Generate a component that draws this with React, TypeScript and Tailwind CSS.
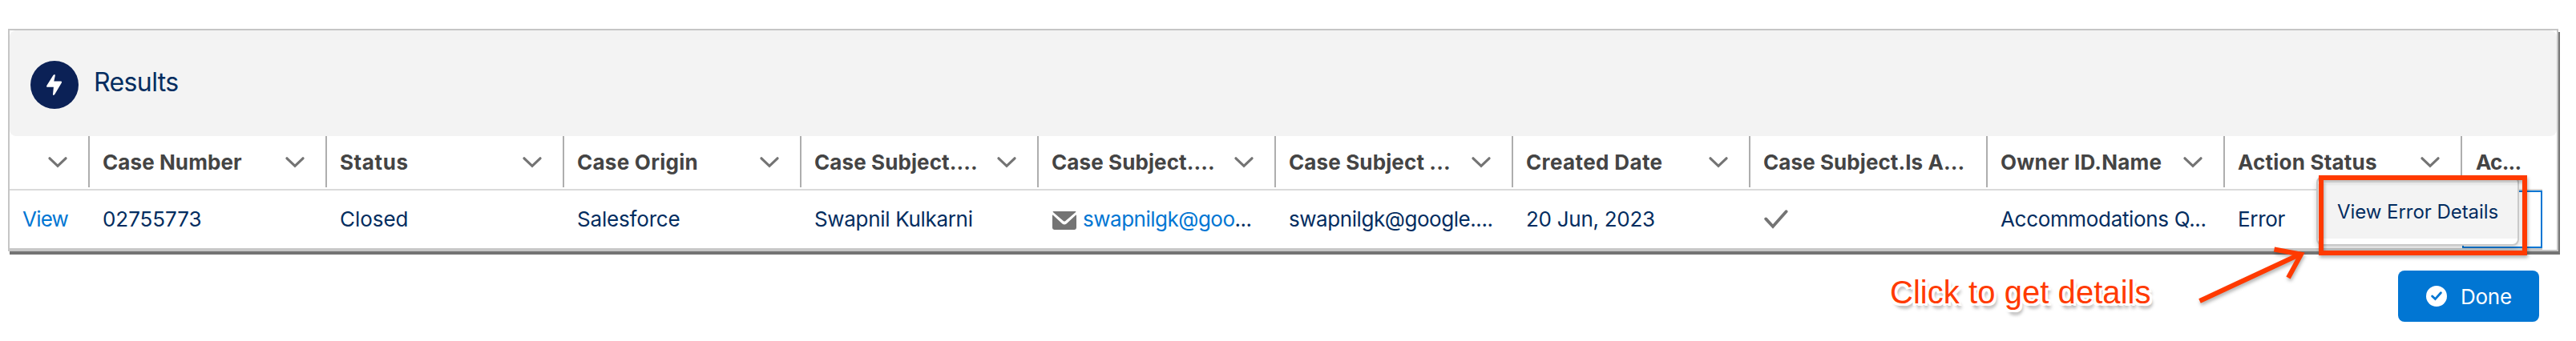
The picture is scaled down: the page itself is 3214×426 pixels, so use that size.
import React from 'react';

type Column = { title: string; tracking: string; menu?: boolean };

const columns: Column[] = [
  { title: 'Case Number', tracking: 'tracking-[0.086px]', menu: true },
  { title: 'Status', tracking: 'tracking-[0.6px]', menu: true },
  { title: 'Case Origin', tracking: 'tracking-[0.26px]', menu: true },
  { title: 'Case Subject....', tracking: 'tracking-[0.1px]', menu: true },
  { title: 'Case Subject....', tracking: 'tracking-[0.1px]', menu: true },
  { title: 'Case Subject ...', tracking: 'tracking-[0.13px]', menu: true },
  { title: 'Created Date', tracking: 'tracking-[0.37px]', menu: true },
  { title: 'Case Subject.Is A...', tracking: 'tracking-[0.08px]' },
  { title: 'Owner ID.Name', tracking: 'tracking-[0.22px]', menu: true },
  { title: 'Action Status', tracking: 'tracking-[0.21px]', menu: true },
];

function Chevron() {
  return (
    <svg className="h-[14px] w-6 shrink-0" viewBox="0 0 24 14" fill="none" stroke="#747474" strokeWidth="3.2" strokeLinecap="round" strokeLinejoin="miter">
      <path d="M2 1.8 12 11.4 22 1.8" />
    </svg>
  );
}

function HeaderCell({ title, tracking, menu }: Column) {
  return (
    <div className="flex h-16 w-[296px] items-center justify-between border-r-2 border-[#aeaeae] pt-0.5 pr-[26px] pl-4">
      <span className={`whitespace-nowrap text-[26px] leading-8 font-bold text-[#444444] ${tracking}`}>{title}</span>
      {menu && <Chevron />}
    </div>
  );
}

function Cell({ className = '', children }: { className?: string; children: React.ReactNode }) {
  return <div className={`flex w-[296px] items-center whitespace-nowrap pl-4 ${className}`}>{children}</div>;
}

function ActionMenu() {
  return (
    <div className="absolute top-[220px] left-[2890px] h-[87px] w-[253px] rounded-lg border-2 border-[#c9c9c9] bg-white pt-2 shadow-[0_4px_6px_rgba(0,0,0,0.16)]">
      <div className="flex h-[68px] items-center bg-[#f3f3f3] pt-0.5 pl-6 text-2xl leading-9 tracking-[-0.05px] whitespace-nowrap text-[#032d60]">
        View Error Details
      </div>
    </div>
  );
}

function Annotations() {
  return (
    <>
      <div className="absolute top-[219px] left-[2893px] h-[100px] w-[260px] border-[6px] border-[#ff3a00] drop-shadow-[1px_3px_2px_rgba(0,0,0,0.3)]" />
      <svg
        className="absolute top-[300px] left-[2730px] h-[90px] w-[160px] drop-shadow-[1px_3px_2px_rgba(0,0,0,0.3)]"
        viewBox="0 0 160 90"
        fill="none"
        stroke="#ff3a00"
        strokeWidth="6"
      >
        <path d="M14.5 76 141 17" />
        <path d="M107.5 11.5 141 17.8 125 47" strokeMiterlimit="10" />
      </svg>
      <div className="absolute top-[341px] left-[2358px] font-['Liberation_Sans',sans-serif] text-[40px] leading-[48px] tracking-[0.05px] whitespace-nowrap text-[#ff3a00] [text-shadow:0_0_2px_#fff,2px_0_0_#fff,-2px_0_0_#fff,0_2px_0_#fff,0_-2px_0_#fff,3px_3px_0_#fff,3px_-2px_0_#fff,-3px_3px_0_#fff,-2px_-2px_0_#fff,3px_6px_4px_rgba(0,0,0,0.4)]">
        Click to get details
      </div>
    </>
  );
}

export default function App() {
  return (
    <div className="relative h-[426px] w-[3214px] overflow-hidden bg-white pt-9 pl-[10px] font-[Inter,sans-serif] text-[26px] leading-8 text-[#032d60]">
      <section className="h-[278px] w-[3182px] border-2 border-[#c6c6c6] bg-white shadow-[2px_4px_0_#747474]">
        <header className="flex h-[132px] rounded-lg bg-[#f3f3f3] pt-[38px] pl-[26px]">
          <svg className="size-[60px]" viewBox="0 0 60 60">
            <circle cx="30" cy="30" r="30" fill="#0b2156" />
            <path
              d="M28.4 18 Q31 15.8 30.8 18.6 L29.3 25.6 H38 Q39.8 25.8 38.8 27.4 L30.2 42 Q28.2 44.2 28 41.8 L28.9 32.8 H20.9 Q19.2 32.6 20.4 30.8Z"
              fill="#fff"
            />
          </svg>
          <h2 className="mt-[7px] ml-[19px] text-[32px] leading-10 tracking-[-0.6px]">Results</h2>
        </header>

        <div className="w-[3160px]">
          <div className="flex h-[68px] border-b-2 border-[#dadada]">
            <div className="flex h-16 w-[100px] items-center justify-end border-r-2 border-[#aeaeae] pt-0.5 pr-[26px]">
              <Chevron />
            </div>
            {columns.map((column, i) => (
              <HeaderCell key={i} {...column} />
            ))}
            <div className="flex h-16 items-center pt-0.5 pl-[17px] font-bold tracking-[-0.74px] text-[#444444]">Ac...</div>
          </div>

          <div className="flex h-[74px] border-b-2 border-[#c9c9c9]">
            <div className="flex w-[100px] items-center pl-4 tracking-[-0.8px] text-[#0176d3]">View</div>
            <Cell className="tracking-[-0.05px]">02755773</Cell>
            <Cell className="tracking-[-0.05px]">Closed</Cell>
            <Cell className="tracking-[-0.18px]">Salesforce</Cell>
            <Cell className="tracking-[-0.32px]">Swapnil Kulkarni</Cell>
            <Cell className="tracking-[-0.49px]">
              <svg className="mt-[3px] mr-2 ml-[1px] h-[23px] w-[30px]" viewBox="0 0 30 23" fill="#747474">
                <path d="M1.4 0H28.6Q30 0 29.2 1L16 12.2Q15 13 14 12.2L.8 1Q0 0 1.4 0Z" />
                <path d="M0 5.2Q0 4.2.8 4.8L12.4 15.4Q15 17.6 17.6 15.4L29.2 4.8Q30 4.2 30 5.2V20.6Q30 23 27.6 23H2.4Q0 23 0 20.6Z" />
              </svg>
              <span className="text-[#0176d3]">swapnilgk@goo</span>...
            </Cell>
            <Cell className="tracking-[-0.44px]">swapnilgk@google....</Cell>
            <Cell className="tracking-[-0.28px]">20 Jun, 2023</Cell>
            <Cell>
              <svg className="ml-[1px] h-6 w-[30px]" viewBox="0 0 30 24" fill="none" stroke="#747474" strokeWidth="3.8" strokeLinecap="round">
                <path d="M2.2 11.4 11 21 27.6 2.2" />
              </svg>
            </Cell>
            <Cell className="tracking-[-0.33px]">Accommodations Q...</Cell>
            <Cell className="tracking-[-0.32px]">Error</Cell>
            <div className="w-[100px] border-2 border-[#0176d3]" />
          </div>
        </div>
      </section>

      <footer className="mt-6 flex w-[3158px] justify-end">
        <button className="flex h-16 w-44 items-center rounded-lg bg-[#0176d3] pl-[35px] text-white">
          <svg className="size-[26px]" viewBox="0 0 26 26">
            <circle cx="13" cy="13" r="13" fill="#fff" />
            <path d="M7.6 13 11.4 16.6 18.4 8.8" fill="none" stroke="#0176d3" strokeWidth="2.8" strokeLinecap="round" />
          </svg>
          <span className="ml-[17px] pt-px tracking-[-0.24px]">Done</span>
        </button>
      </footer>

      <ActionMenu />
      <Annotations />
    </div>
  );
}
